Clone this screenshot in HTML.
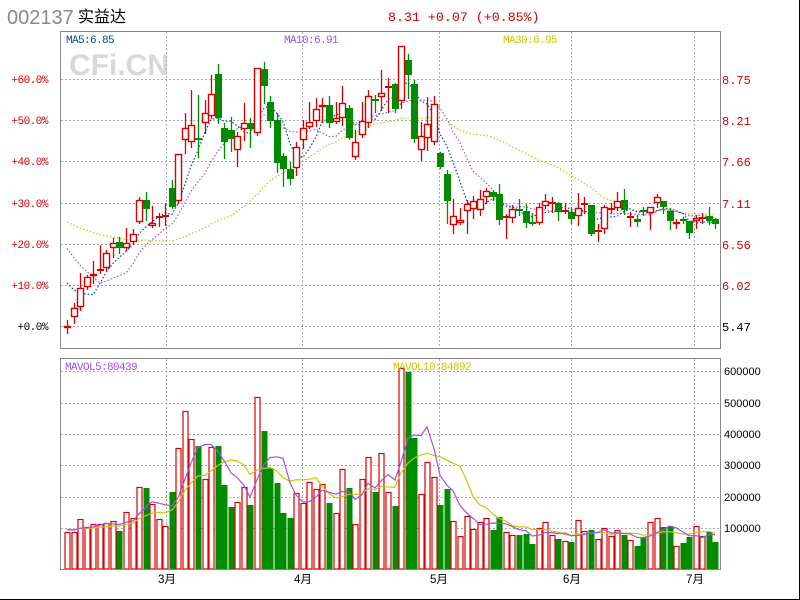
<!DOCTYPE html>
<html><head><meta charset="utf-8">
<style>
html,body{margin:0;padding:0;background:#fff;}
svg{display:block;}
</style></head>
<body>
<svg id="s" xmlns="http://www.w3.org/2000/svg" width="800" height="600" viewBox="0 0 800 600" font-family="'Liberation Sans','Noto Sans CJK SC',sans-serif">
<rect x="0" y="0" width="800" height="600" fill="#fff"/>
<line x1="799.5" y1="0" x2="799.5" y2="600" stroke="#000"/>
<line x1="0" y1="599.5" x2="800" y2="599.5" stroke="#000"/>
<text x="7" y="24" font-size="20" fill="#8a8a8a">002137</text>
<text x="78" y="22" font-size="16" fill="#000" font-family="'Noto Sans CJK SC',sans-serif">实益达</text>
<text x="388" y="21" font-size="13.3" fill="#d00000" font-family="'Liberation Mono',monospace">8.31 +0.07 (+0.85%)</text>
<text x="69" y="75" font-size="30" font-weight="bold" fill="#d8d8d8">CFi.CN</text>
<g id="grid"></g>
<g id="lines"></g>
<g id="cands"></g>
<rect x="60.5" y="31.5" width="660" height="317" fill="none" stroke="#888"/>
<rect x="60.5" y="358.5" width="660" height="211" fill="none" stroke="#888"/>
<text x="66" y="43" font-size="11" fill="#004c99" font-family="'Liberation Mono',monospace" letter-spacing="-0.6">MA5:6.85</text>
<text x="284" y="43" font-size="11" fill="#a050f0" font-family="'Liberation Mono',monospace" letter-spacing="-0.6">MA10:6.91</text>
<text x="503" y="43" font-size="11" fill="#c8c800" font-family="'Liberation Mono',monospace" letter-spacing="-0.6">MA30:6.95</text>
<text x="65" y="370" font-size="11" fill="#a050f0" font-family="'Liberation Mono',monospace" letter-spacing="-0.6">MAVOL5:80439</text>
<text x="393" y="370" font-size="11" fill="#c8c800" font-family="'Liberation Mono',monospace" letter-spacing="-0.6">MAVOL10:84892</text>
<g id="labels" font-size="10.5"></g>
</svg>
<script>
var NS="http://www.w3.org/2000/svg";
function el(p,t,a,txt){var e=document.createElementNS(NS,t);for(var k in a)e.setAttribute(k,a[k]);if(txt!==undefined)e.textContent=txt;document.getElementById(p).appendChild(e);return e;}
var R="#d80000",G="#008c00";
var hy=[79,120,161,203,244,285,326];
hy.forEach(function(y){el("grid","line",{x1:61,x2:720,y1:y+.5,y2:y+.5,stroke:"#aaa","stroke-dasharray":"2 2"});});
var vy=[371,403,434,465,497,528];
vy.forEach(function(y){el("grid","line",{x1:61,x2:720,y1:y+.5,y2:y+.5,stroke:"#aaa","stroke-dasharray":"2 2"});});
var vx=[166,302,439,571,694];
vx.forEach(function(x){el("grid","line",{x1:x+.5,x2:x+.5,y1:32,y2:348,stroke:"#aaa","stroke-dasharray":"2 2"});el("grid","line",{x1:x+.5,x2:x+.5,y1:359,y2:569,stroke:"#aaa","stroke-dasharray":"2 2"});});
var pl=["+60.0%","+50.0%","+40.0%","+30.0%","+20.0%","+10.0%","+0.0%"];
var pr=["8.75","8.21","7.66","7.11","6.56","6.02","5.47"];
hy.forEach(function(y,i){
 el("labels","text",{x:48,y:y+4,"text-anchor":"end",fill:i==6?"#000":R,"font-family":"'Liberation Mono',monospace","font-size":"11","letter-spacing":"-0.5"},pl[i]);
 el("labels","text",{x:722,y:y+5,fill:i==6?"#000":R,"font-family":"'Liberation Mono',monospace","font-size":"12"},pr[i]);
});
["600000","500000","400000","300000","200000","100000"].forEach(function(t,i){el("labels","text",{x:724,y:vy[i]+4,fill:"#000","font-size":"11"},t);});
[["3月",158],["4月",294],["5月",430],["6月",563],["7月",686]].forEach(function(m){el("labels","text",{x:m[1],y:583,fill:"#000","font-size":"11.5"},m[0]);});
var C=[[326,328,320,333,"r"],[308,317,303,323,"r"],[288,307,273,310,"r"],[277,287,275,289,"r"],[274,276,261,283,"r"],[270,270,245,273,"c"],[253,268,250,270,"r"],[243,248,238,257,"r"],[242,248,237,253,"g"],[243,248,228,250,"r"],
[234,242,229,244,"r"],[200,222,197,223,"r"],[200,209,192,220,"g"],[223,226,206,227,"r"],[217,217,213,226,"c"],[216,216,203,225,"c"],[188,207,180,208,"g"],[154,201,154,203,"r"],[128,140,113,153,"r"],[125,142,90,147,"r"],
[139,139,95,157,"x"],[113,123,100,133,"r"],[94,116,75,118,"r"],[74,118,64,123,"g"],[128,142,123,158,"g"],[130,139,117,151,"g"],[136,150,132,166,"r"],[123,129,103,140,"r"],[123,129,118,147,"g"],[68,133,68,135,"r"],
[69,86,62,103,"g"],[102,121,96,127,"g"],[120,163,113,172,"g"],[156,169,153,186,"g"],[169,179,162,184,"g"],[147,168,142,175,"r"],[128,140,120,148,"r"],[122,127,102,128,"r"],[109,121,98,126,"r"],[105,107,98,122,"r"],
[105,123,96,127,"g"],[118,122,102,123,"r"],[103,118,86,125,"r"],[108,138,105,139,"g"],[142,157,130,159,"r"],[121,135,102,137,"r"],[96,123,90,127,"r"],[100,100,95,112,"x"],[93,97,70,110,"r"],[87,87,78,112,"c"],
[84,109,83,112,"g"],[46,101,46,108,"r"],[60,75,54,98,"g"],[84,139,80,142,"g"],[136,150,122,160,"r"],[124,138,97,150,"r"],[104,142,96,144,"r"],[153,167,152,168,"g"],[174,201,170,223,"g"],[216,225,199,233,"r"],
[220,223,208,224,"r"],[204,211,200,233,"r"],[201,209,196,218,"r"],[199,210,190,215,"r"],[191,197,188,203,"r"],[192,197,190,200,"g"],[194,220,184,224,"g"],[217,217,214,238,"c"],[209,218,205,222,"r"],[210,210,199,215,"x"],
[211,223,204,227,"g"],[223,223,213,225,"x"],[207,223,203,224,"r"],[201,206,194,208,"r"],[203,203,197,212,"c"],[203,212,202,220,"g"],[211,211,203,213,"c"],[212,219,207,223,"g"],[208,216,193,225,"r"],[204,204,197,213,"c"],
[205,234,205,235,"g"],[231,231,224,241,"c"],[207,229,205,233,"r"],[209,209,203,213,"c"],[201,208,192,210,"r"],[200,210,189,214,"g"],[217,217,212,226,"c"],[219,222,215,226,"g"],[211,211,207,215,"x"],[207,213,207,229,"r"],
[197,203,194,207,"r"],[201,207,201,213,"g"],[211,221,208,229,"g"],[222,224,219,228,"r"],[220,220,217,223,"x"],[221,233,221,238,"g"],[218,221,215,228,"r"],[218,218,213,223,"c"],[216,221,207,224,"g"],[219,224,218,228,"g"]];
var V=[532,532,519,527,524,524,523,521,-531,512,518,487,-488,504,519,526,-492,448,411,439,-446,479,447,-446,-485,-507,502,487,-505,397,-431,-468,-483,-513,-518,493,503,482,489,484,-503,513,469,-488,524,479,457,-492,453,492,-506,368,-372,-438,494,462,477,-505,-489,521,536,516,529,522,518,-530,-517,532,535,-535,-534,-544,528,522,535,-539,541,-542,520,531,-530,539,528,536,530,-535,540,-546,-537,522,518,-527,-526,546,-543,-537,526,536,-532,-542];
function X(i){return Math.round(67+6.55*i);}
var closes=[];
C.forEach(function(c,i){
 var x=X(i),t=c[4],col=(t=="g"||t=="x")?G:R;
 el("cands","line",{x1:x+.5,x2:x+.5,y1:c[2],y2:c[3]+1,stroke:col,"stroke-width":1.3});
 if(t=="c"||t=="x"){el("cands","rect",{x:x-3,y:c[0]-1,width:7,height:2,fill:col});}
 else if(t=="g"){el("cands","rect",{x:x-3,y:c[0],width:7,height:Math.max(2,c[1]-c[0]),fill:col});}
 else{el("cands","rect",{x:x-2.5,y:c[0]+.5,width:6,height:Math.max(1,c[1]-c[0]-1),fill:"#fff",stroke:col,"stroke-width":1.4});}
 closes.push(t=="g"?c[1]:c[0]);
});
V.forEach(function(v,i){
 var x=X(i),g=v<0,y=Math.abs(v);
 if(g)el("cands","rect",{x:x-2.5,y:y,width:6,height:569-y,fill:G});
 else el("cands","rect",{x:x-2,y:y+.5,width:5,height:568.5-y,fill:"#fff",stroke:R,"stroke-width":1.2});
});
var pre=[];for(var k=0;k<20;k++)pre.push(209);for(k=0;k<5;k++)pre.push(214);for(k=0;k<4;k++)pre.push(272);
var all=pre.concat(closes);
function ma(arr,n,off,out){var pts=[];for(var i=0;i<out;i++){var s=0;for(var j=0;j<n;j++)s+=arr[off+i-j];pts.push(X(i)+","+(s/n).toFixed(1));}return pts.join(" ");}
el("lines","polyline",{points:ma(all,30,29,100),fill:"none",stroke:"#c8c800","stroke-width":1.2,"stroke-dasharray":"1.5 2"});
el("lines","polyline",{points:ma(all,10,29,100),fill:"none",stroke:"#a050f0","stroke-width":1.2,"stroke-dasharray":"1.5 2"});
el("lines","polyline",{points:ma(all,5,29,100),fill:"none",stroke:"#004c99","stroke-width":1.2,"stroke-dasharray":"1.5 2"});
var vh=[];for(k=0;k<9;k++)vh.push(529);V.forEach(function(v){vh.push(Math.abs(v));});
el("cands","polyline",{points:ma(vh,10,9,100),fill:"none",stroke:"#c8c800","stroke-width":1.2});
el("cands","polyline",{points:ma(vh,5,9,100),fill:"none",stroke:"#a050f0","stroke-width":1.2});
</script>
</body></html>
